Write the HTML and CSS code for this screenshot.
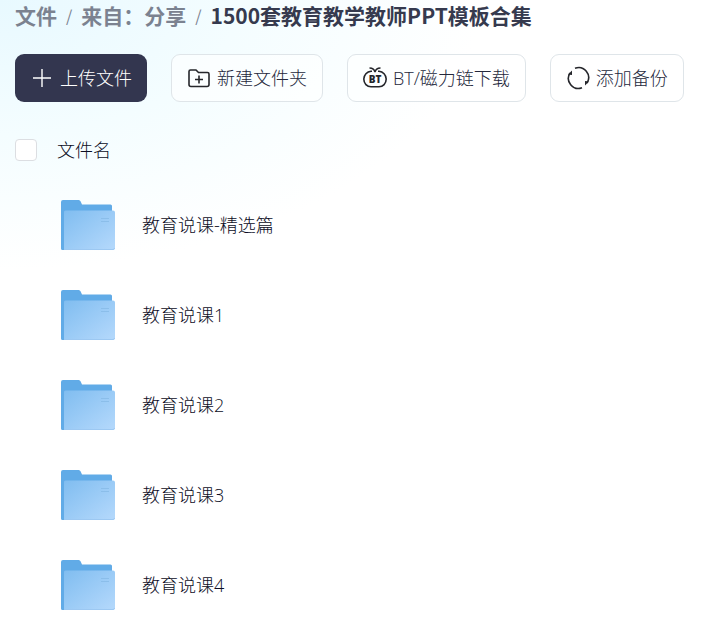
FILE: index.html
```html
<!DOCTYPE html>
<html lang="zh-CN">
<head>
  <meta charset="UTF-8">
  <meta name="viewport" content="width=device-width, initial-scale=1">
  <title>1500套教育教学教师PPT模板合集</title>
  <link rel="stylesheet" href="styles.css">
</head>
<body>

  <!-- shared folder icon -->
  <svg class="defs" width="0" height="0" aria-hidden="true">
    <defs>
      <linearGradient id="folder-front" x1="0" y1="0" x2="1" y2="1">
        <stop offset="0" stop-color="#80bdf0"/>
        <stop offset="1" stop-color="#b5d9fc"/>
      </linearGradient>
      <symbol id="folder" viewBox="0 0 54 51">
        <path fill="#61abe7" d="M2 0h15c1.500 0 2.200.6 2.800 1.800L21 4.500h28.500A1.500 1.500 0 0 1 51 6v42H3v2H1.500A1.500 1.500 0 0 1 0 48.500V2a2 2 0 0 1 2-2z"/>
        <path fill="url(#folder-front)" d="M4.500 10.500H52a2 2 0 0 1 2 2V48a2 2 0 0 1-2 2H3V12a1.500 1.500 0 0 1 1.500-1.500z"/>
        <path fill="none" stroke="#9cc8f2" d="M3 49.500h49a1.500 1.500 0 0 0 1.500-1.500"/>
        <path fill="none" stroke="#8bbeea" d="M40 18.500h8M40 21.500h8"/>
      </symbol>
    </defs>
  </svg>

  <div class="container">
    <nav class="breadcrumb">
      <a href="#">文件</a>
      <span class="slash">/</span>
      <a href="#">来自：分享</a>
      <span class="slash">/</span>
      <span class="current">1500套教育教学教师PPT模板合集</span>
    </nav>

    <div class="toolbar">
      <button class="btn btn-primary">
        <svg class="icon" viewBox="0 0 24 24"><path d="M12 3v18M3 12h18"/></svg>
        上传文件
      </button>
      <button class="btn">
        <svg class="icon" viewBox="0 0 24 24">
          <path d="M2 18.500v-13A1.500 1.500 0 0 1 3.500 4H9l2.500 2.500h9A1.500 1.500 0 0 1 22 8v10.500a2 2 0 0 1-2 2H4a2 2 0 0 1-2-2zM12 9.500v8M8 13.500h8"/>
        </svg>
        新建文件夹
      </button>
      <button class="btn">
        <svg class="icon" viewBox="0 0 24 24">
          <path d="M9 5.200H8a8 8 0 0 0-7.200 7.800c0 4.500 3.200 7.800 7.200 7.800h8c4 0 7.200-3.300 7.200-7.800A8 8 0 0 0 16 5.200h-1"/>
          <path d="M6.500 2c3 0 5 1.500 5.500 4.200C12.500 3.500 14.500 2 17.500 2"/>
          <text class="bt" x="12" y="16.500">BT</text>
        </svg>
        BT/磁力链下载
      </button>
      <button class="btn">
        <svg class="icon" viewBox="0 0 24 24">
          <path d="M9 2.300A10 10 0 0 1 21 17M16 21.700A10 10 0 0 1 4 7"/>
          <path class="solid" d="M2 8.500 6 4.500V9zM23 15.500 19 19.500V15z"/>
        </svg>
        添加备份
      </button>
    </div>

    <div class="list-head">
      <input type="checkbox" id="check-all" class="checkbox">
      <label for="check-all">文件名</label>
    </div>

    <div class="file-list">
      <div class="file">
        <svg class="folder"><use href="#folder"/></svg>
        <span>教育说课-精选篇</span>
      </div>
      <div class="file">
        <svg class="folder"><use href="#folder"/></svg>
        <span>教育说课1</span>
      </div>
      <div class="file">
        <svg class="folder"><use href="#folder"/></svg>
        <span>教育说课2</span>
      </div>
      <div class="file">
        <svg class="folder"><use href="#folder"/></svg>
        <span>教育说课3</span>
      </div>
      <div class="file">
        <svg class="folder"><use href="#folder"/></svg>
        <span>教育说课4</span>
      </div>
    </div>
  </div>

</body>
</html>
```

FILE: styles.css
```css
* {
  box-sizing: border-box;
}

body {
  margin: 0;
  font-family: "Open Sans", "Noto Sans CJK SC", sans-serif;
  font-size: 18px;
  font-weight: 300;
  line-height: 24px;
  color: #0c0d24;
  background: radial-gradient(ellipse 480px 270px at 0 0, #e8f9ff 0%, #f4fdff 50%, #fff 100%) no-repeat #fff;
}

.defs {
  position: absolute;
}

.container {
  padding: 0 15px;
}

.breadcrumb {
  display: flex;
  align-items: center;
  gap: 9px;
  height: 30px;
  font-family: "Noto Sans CJK SC", sans-serif;
  font-size: 21px;
  font-weight: 700;
  color: #7b8290;
  white-space: nowrap;
}

.breadcrumb a {
  color: inherit;
  text-decoration: none;
}

.slash {
  font-size: 16px;
  font-weight: 400;
}

.current {
  color: #363a4e;
}

.toolbar {
  display: flex;
  gap: 24px;
  padding-top: 24px;
}

.btn {
  display: flex;
  align-items: center;
  gap: 6px;
  height: 48px;
  padding: 0 15px;
  border: 1px solid #dfe5e9;
  border-radius: 9px;
  background-color: rgba(255, 255, 255, 0.6);
  color: #25283c;
  font: inherit;
  white-space: nowrap;
  cursor: pointer;
}

.btn-primary {
  border: none;
  background-color: #33364f;
  color: #fff;
}

.icon {
  width: 24px;
  height: 24px;
  flex: none;
  fill: none;
  stroke: #25262b;
  stroke-width: 1.6;
}

.btn-primary .icon {
  stroke: #fff;
  stroke-width: 1.4;
}

.icon .solid {
  fill: #25262b;
  stroke: none;
}

.icon .bt {
  fill: #25262b;
  stroke: none;
  font-size: 10px;
  font-weight: 800;
  text-anchor: middle;
}

.list-head {
  display: flex;
  align-items: center;
  gap: 20px;
  height: 60px;
  margin-top: 18px;
}

.checkbox {
  appearance: none;
  width: 22px;
  height: 22px;
  margin: 0;
  border: 1px solid #dcdee2;
  border-radius: 4px;
  background-color: #fff;
}

.file {
  display: flex;
  align-items: center;
  gap: 27px;
  height: 90px;
  padding-left: 46px;
}

.folder {
  width: 54px;
  height: 51px;
  flex: none;
}
```
